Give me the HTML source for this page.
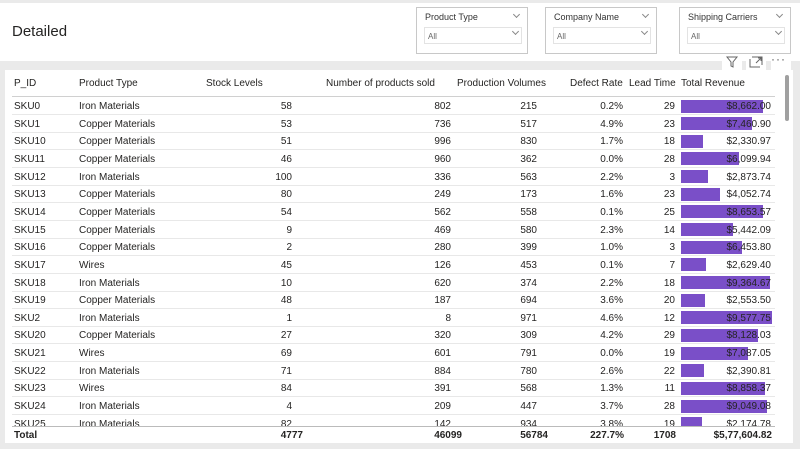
<!DOCTYPE html>
<html><head><meta charset="utf-8"><style>
*{margin:0;padding:0;box-sizing:border-box}
body{width:800px;height:449px;background:#eaeaea;font-family:"Liberation Sans",sans-serif;font-size:10px;color:#252423;position:relative;overflow:hidden}
.hdr{position:absolute;left:0;top:3px;width:800px;height:58px;background:#fff}
.title{position:absolute;left:12px;top:23px;font-size:15px;color:#252423}
.slc{position:absolute;top:7px;width:112px;height:47px;border:1px solid #c8c8c8;background:#fff}
.slc .l{position:absolute;left:8px;top:4px;font-size:9px;color:#333}
.slc .d{position:absolute;left:7px;top:19px;width:98px;height:17px;border:1px solid #e3e3e3;font-size:8px;color:#666;padding:4px 0 0 3px}
.chev{position:absolute;width:5px;height:5px;border-right:1px solid #888;border-bottom:1px solid #888;transform:rotate(45deg)}
.panel{position:absolute;left:5px;top:70px;width:788px;height:373px;background:#fff}
.c{position:absolute;white-space:nowrap}
.r{text-align:right}
.line{position:absolute;left:12px;width:763px;height:1px;background:#e8e8e8}
.bar{position:absolute;left:681px;height:13px;background:#7a4fc8}
.ic{position:absolute;top:54px;width:20px;height:16px;background:#fff}
</style></head><body>
<div class="hdr"></div>
<div class="title">Detailed</div>
<div class="slc" style="left:416px"><div class="l">Product Type</div><div class="chev" style="left:97px;top:4px"></div><div class="d">All</div><div class="chev" style="left:96px;top:21px"></div></div>
<div class="slc" style="left:545px"><div class="l">Company Name</div><div class="chev" style="left:97px;top:4px"></div><div class="d">All</div><div class="chev" style="left:96px;top:21px"></div></div>
<div class="slc" style="left:679px"><div class="l">Shipping Carriers</div><div class="chev" style="left:97px;top:4px"></div><div class="d">All</div><div class="chev" style="left:96px;top:21px"></div></div>
<div class="ic" style="left:722px"><svg width="20" height="16"><path d="M5 3h10l-4 5v5l-2-1V8z" fill="none" stroke="#666" stroke-width="1"/></svg></div>
<div class="ic" style="left:746px"><svg width="20" height="16"><path d="M4 5v8h10M6 3h10v8M10 9l5-5M12 4h3v3" fill="none" stroke="#666" stroke-width="1"/></svg></div>
<div class="ic" style="left:771px;color:#555;font-size:12px;line-height:10px;letter-spacing:1px">···</div>
<div class="panel"></div>
<div style="position:absolute;left:785px;top:75px;width:4px;height:46px;background:#a0a0a0;border-radius:2px"></div>
<div id="t"></div>
<script>
var H='';
function c(x,y,t,cls,w){H+='<div class="c '+(cls||'')+'" style="'+(cls?'left:'+(x-(w||100))+'px;width:'+(w||100)+'px;':'left:'+x+'px;')+'top:'+y+'px">'+t+'</div>';}
var hy=78;
c(14,hy,'P_ID');c(79,hy,'Product Type');c(206,hy,'Stock Levels');c(326,hy,'Number of products sold');c(457,hy,'Production Volumes');c(570,hy,'Defect Rate');c(629,hy,'Lead Time');c(681,hy,'Total Revenue');
var d=[['SKU0','Iron Materials',58,802,215,'0.2%',29,8662.00,'$8,662.00'],['SKU1','Copper Materials',53,736,517,'4.9%',23,7460.90,'$7,460.90'],['SKU10','Copper Materials',51,996,830,'1.7%',18,2330.97,'$2,330.97'],['SKU11','Copper Materials',46,960,362,'0.0%',28,6099.94,'$6,099.94'],['SKU12','Iron Materials',100,336,563,'2.2%',3,2873.74,'$2,873.74'],['SKU13','Copper Materials',80,249,173,'1.6%',23,4052.74,'$4,052.74'],['SKU14','Copper Materials',54,562,558,'0.1%',25,8653.57,'$8,653.57'],['SKU15','Copper Materials',9,469,580,'2.3%',14,5442.09,'$5,442.09'],['SKU16','Copper Materials',2,280,399,'1.0%',3,6453.80,'$6,453.80'],['SKU17','Wires',45,126,453,'0.1%',7,2629.40,'$2,629.40'],['SKU18','Iron Materials',10,620,374,'2.2%',18,9364.67,'$9,364.67'],['SKU19','Copper Materials',48,187,694,'3.6%',20,2553.50,'$2,553.50'],['SKU2','Iron Materials',1,8,971,'4.6%',12,9577.75,'$9,577.75'],['SKU20','Copper Materials',27,320,309,'4.2%',29,8128.03,'$8,128.03'],['SKU21','Wires',69,601,791,'0.0%',19,7087.05,'$7,087.05'],['SKU22','Iron Materials',71,884,780,'2.6%',22,2390.81,'$2,390.81'],['SKU23','Wires',84,391,568,'1.3%',11,8858.37,'$8,858.37'],['SKU24','Iron Materials',4,209,447,'3.7%',28,9049.08,'$9,049.08'],['SKU25','Iron Materials',82,142,934,'3.8%',19,2174.78,'$2,174.78']];
H+='<div class="line" style="top:96px;background:#d0d0d0"></div>';
H+='<div style="position:absolute;left:0;top:97px;width:800px;height:329px;overflow:hidden">';
for(var i=0;i<d.length;i++){var r=d[i],y=i*17.65+4;
H+='<div class="bar" style="top:'+(y-1.5)+'px;width:'+(r[7]*0.0095)+'px"></div>';
c(14,y,r[0]);c(79,y,r[1]);c(292,y,r[2],'r');c(451,y,r[3],'r');c(537,y,r[4],'r');c(623,y,r[5],'r');c(675,y,r[6],'r');c(771,y,r[8],'r');
H+='<div class="line" style="top:'+(y+13)+'px"></div>';}
H+='</div>';
H+='<div class="line" style="top:426px;background:#bbb"></div>';
var ty=430;
H+='<div style="font-weight:bold">';c(14,ty,'Total');c(303,ty,'4777','r');c(462,ty,'46099','r');c(548,ty,'56784','r');c(624,ty,'227.7%','r');c(676,ty,'1708','r');c(772,ty,'$5,77,604.82','r');H+='</div>';
document.getElementById('t').innerHTML=H;
</script>
</body></html>
